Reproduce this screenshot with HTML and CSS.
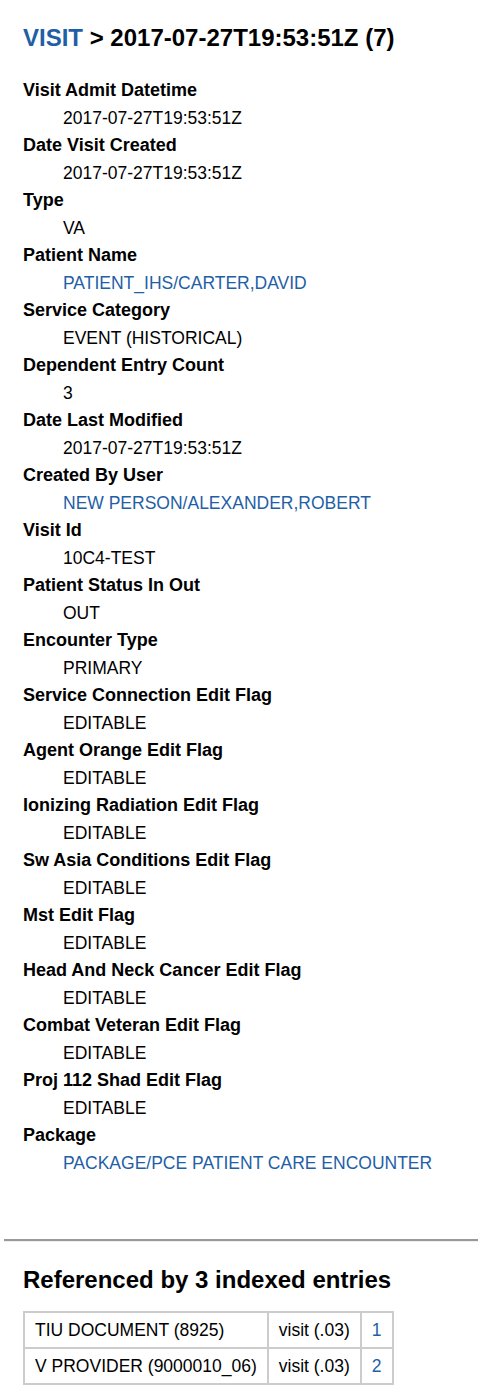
FILE: index.html
```html
<!DOCTYPE html>
<html>
<head>
<meta charset="utf-8">
<link rel="stylesheet" href="styles.css">
</head>
<body>
<div class="page">
  <h1 class="title"><a class="link" href="#">VISIT</a> &gt; 2017-07-27T19:53:51Z (7)</h1>
  <dl class="fields">
    <dt>Visit Admit Datetime</dt><dd>2017-07-27T19:53:51Z</dd>
    <dt>Date Visit Created</dt><dd>2017-07-27T19:53:51Z</dd>
    <dt>Type</dt><dd>VA</dd>
    <dt>Patient Name</dt><dd><a class="link" href="#">PATIENT_IHS/CARTER,DAVID</a></dd>
    <dt>Service Category</dt><dd>EVENT (HISTORICAL)</dd>
    <dt>Dependent Entry Count</dt><dd>3</dd>
    <dt>Date Last Modified</dt><dd>2017-07-27T19:53:51Z</dd>
    <dt>Created By User</dt><dd><a class="link" href="#">NEW PERSON/ALEXANDER,ROBERT</a></dd>
    <dt>Visit Id</dt><dd>10C4-TEST</dd>
    <dt>Patient Status In Out</dt><dd>OUT</dd>
    <dt>Encounter Type</dt><dd>PRIMARY</dd>
    <dt>Service Connection Edit Flag</dt><dd>EDITABLE</dd>
    <dt>Agent Orange Edit Flag</dt><dd>EDITABLE</dd>
    <dt>Ionizing Radiation Edit Flag</dt><dd>EDITABLE</dd>
    <dt>Sw Asia Conditions Edit Flag</dt><dd>EDITABLE</dd>
    <dt>Mst Edit Flag</dt><dd>EDITABLE</dd>
    <dt>Head And Neck Cancer Edit Flag</dt><dd>EDITABLE</dd>
    <dt>Combat Veteran Edit Flag</dt><dd>EDITABLE</dd>
    <dt>Proj 112 Shad Edit Flag</dt><dd>EDITABLE</dd>
    <dt>Package</dt><dd><a class="link" href="#">PACKAGE/PCE PATIENT CARE ENCOUNTER</a></dd>
  </dl>
</div>
<hr class="divider">
<div class="page">
  <h2 class="refs-title">Referenced by 3 indexed entries</h2>
  <table class="refs">
    <tr><td>TIU DOCUMENT (8925)</td><td>visit (.03)</td><td><a class="link" href="#">1</a></td></tr>
    <tr><td>V PROVIDER (9000010_06)</td><td>visit (.03)</td><td><a class="link" href="#">2</a></td></tr>
  </table>
</div>
</body>
</html>
```

FILE: styles.css
```css
html, body {
  margin: 0;
  padding: 0;
  background: #fff;
}
body {
  font-family: "Liberation Sans", Arial, sans-serif;
  color: #000;
  font-size: 18px;
}
.page {
  padding: 0 23px;
}
.link {
  color: #1f5fa6;
  text-decoration: none;
}
.title {
  font-size: 24px;
  font-weight: bold;
  margin: 0;
  padding-top: 24px;
  line-height: 28px;
}
.fields {
  margin: 25px 0 0 0;
}
.fields dt {
  font-weight: bold;
  line-height: 27px;
  height: 27px;
}
.fields dd {
  margin: 0 0 0 40px;
  font-size: 17.5px;
  line-height: 28px;
  height: 28px;
}
.divider {
  margin: 62px 0 0 4px;
  border: 0;
  border-top: 2px solid #999;
  border-bottom: 1px solid #eee;
  height: 0;
}
.refs-title {
  font-size: 24px;
  font-weight: bold;
  margin: 24px 0 0 0;
  line-height: 28px;
}
.refs {
  margin: 17px 0 0 0;
  border-collapse: collapse;
  border: 2px solid #ccc;
  font-size: 17.5px;
}
.refs td {
  border: 2px solid #ccc;
  padding: 0 10px;
  height: 34px;
  line-height: 20px;
}
```
